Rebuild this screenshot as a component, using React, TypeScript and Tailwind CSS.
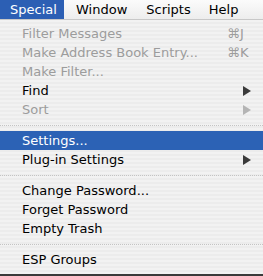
import React from "react";

type Item =
  | { kind: "item"; label: string; disabled?: boolean; shortcut?: string; sub?: boolean; selected?: boolean }
  | { kind: "sep" };

const items: Item[] = [
  { kind: "item", label: "Filter Messages", disabled: true, shortcut: "⌘J" },
  { kind: "item", label: "Make Address Book Entry...", disabled: true, shortcut: "⌘K" },
  { kind: "item", label: "Make Filter...", disabled: true },
  { kind: "item", label: "Find", sub: true },
  { kind: "item", label: "Sort", disabled: true, sub: true },
  { kind: "sep" },
  { kind: "item", label: "Settings...", selected: true },
  { kind: "item", label: "Plug-in Settings", sub: true },
  { kind: "sep" },
  { kind: "item", label: "Change Password..." },
  { kind: "item", label: "Forget Password" },
  { kind: "item", label: "Empty Trash" },
  { kind: "sep" },
  { kind: "item", label: "ESP Groups" },
];

function Arrow({ color }: { color: string }) {
  return (
    <svg width="8" height="10" viewBox="0 0 8 10" className="block">
      <path d="M0 0 L8 5 L0 10 Z" fill={color} />
    </svg>
  );
}

export default function App() {
  return (
    <div
      className="w-[263px] h-[276px] overflow-hidden bg-[#ececec] flex flex-col text-[13px] leading-none"
      style={{ fontFamily: '"DejaVu Sans", "Liberation Sans", sans-serif' }}
    >
      <div className="h-[20px] flex items-stretch bg-gradient-to-b from-[#fbfbfb] to-[#ededed] border-b border-[#c8c8c8] shrink-0">
        <div className="w-[64px] bg-[#2c5fb4] text-white flex items-center pl-[10px]">Special</div>
        <div className="flex items-center pl-[12px] text-black">Window</div>
        <div className="flex items-center pl-[19px] text-black">Scripts</div>
        <div className="flex items-center pl-[18px] text-black">Help</div>
      </div>
      <div
        className="flex-1 flex flex-col pt-[4px] pb-[4px] bg-[#efefef]"
        style={{
          backgroundImage:
            "repeating-linear-gradient(to bottom, #f2f2f2 0px, #f2f2f2 2px, #ececec 2px, #ececec 4px)",
        }}
      >
        {items.map((it, i) =>
          it.kind === "sep" ? (
            <div key={i} className="h-[12px] flex items-center">
              <div className="w-full border-t border-dotted border-[#c4c4c4]" />
            </div>
          ) : (
            <div
              key={i}
              className={
                "h-[19px] flex items-center pl-[22px] pr-[12px] " +
                (it.selected ? "bg-[#2c62b5] text-white" : it.disabled ? "text-[#9c9c9c]" : "text-black")
              }
            >
              <span className="flex-1">{it.label}</span>
              {it.shortcut && <span className="w-[20px] mr-[4px] text-left">{it.shortcut}</span>}
              {it.sub && <Arrow color={it.disabled ? "#b4b4b4" : "#3a3a3a"} />}
            </div>
          )
        )}
      </div>
      <div className="h-[2px] bg-[#3a3a3a] shrink-0" />
    </div>
  );
}
